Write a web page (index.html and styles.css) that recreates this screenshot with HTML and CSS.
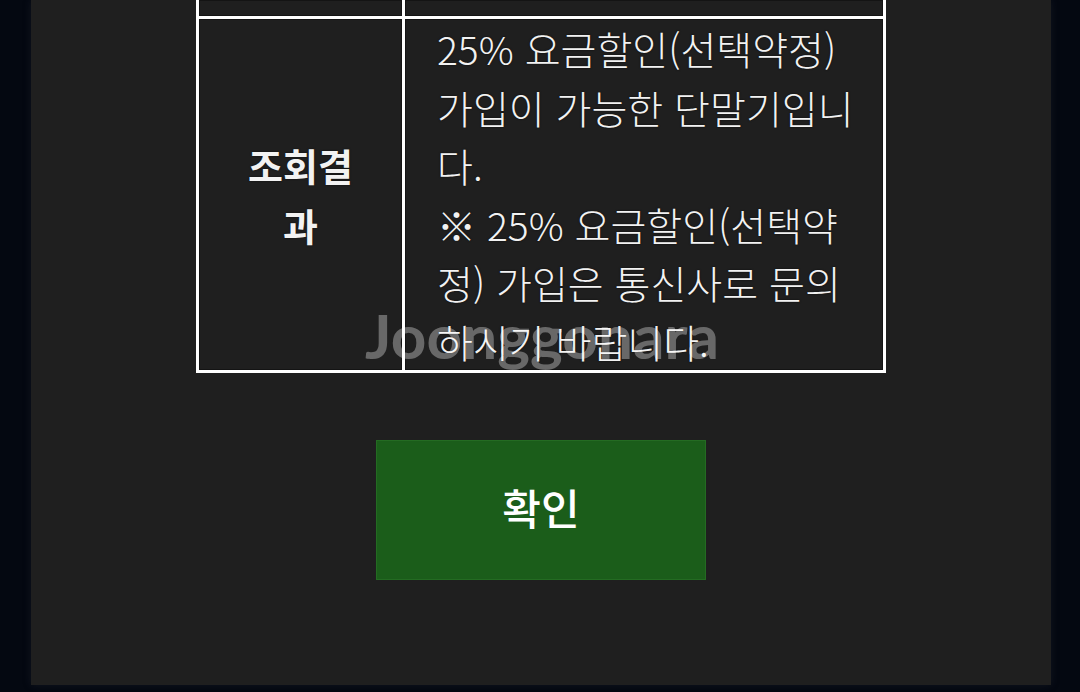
FILE: index.html
```html
<!DOCTYPE html>
<html lang="ko">
<head>
<meta charset="utf-8">
<title>조회결과</title>
<link rel="stylesheet" href="styles.css">
</head>
<body>
<div class="page">
  <div class="panel">
    <table class="result">
      <tr class="top-row">
        <td class="label"></td>
        <td class="value"></td>
      </tr>
      <tr>
        <td class="label"><strong>조회결과</strong></td>
        <td class="value">25% 요금할인(선택약정) 가입이 가능한 단말기입니다.<br>※ 25% 요금할인(선택약정) 가입은 통신사로 문의하시기 바랍니다.</td>
      </tr>
    </table>
    <button class="confirm" type="button">확인</button>
  </div>
</div>
<div class="watermark">Joonggonara</div>
</body>
</html>
```

FILE: styles.css
```css
html, body {
  margin: 0;
  padding: 0;
}
body {
  width: 1080px;
  height: 692px;
  overflow: hidden;
  background: #040811;
  font-family: "Noto Sans CJK KR", "Noto Sans", sans-serif;
  position: relative;
}
.page {
  padding: 0 29px 0 31px;
}
.panel {
  height: 685px;
  background: #1f1f1f;
  display: flex;
  flex-direction: column;
  align-items: center;
  box-shadow: 0 0 8px rgba(60, 60, 70, 0.25);
}
.result {
  border-collapse: separate;
  border-spacing: 0;
  table-layout: fixed;
  width: 690px;
  color: #f2f2f2;
  font-size: 39px;
  font-weight: 300;
  line-height: 58.5px;
  text-shadow: 0 0 2px rgba(0, 0, 0, 0.7);
}
.result td {
  border-right: 3px solid #ffffff;
  border-bottom: 3px solid #ffffff;
  vertical-align: middle;
  padding: 0;
  box-shadow: inset 0 0 0 1px #141414;
}
.result td:first-child {
  border-left: 3px solid #ffffff;
}
.result .label {
  width: 123px;
  padding: 0 40px;
  text-align: center;
}
.result .label strong {
  font-weight: 700;
  font-size: 38px;
}
.result .value {
  padding: 0 22px 0 32px;
  text-align: left;
}
.top-row td {
  height: 16px;
}
.confirm {
  margin-top: 67px;
  width: 330px;
  height: 140px;
  background: #1b5d1a;
  border: 1px solid #246b22;
  color: #ffffff;
  font-family: "Noto Sans CJK KR", "Noto Sans", sans-serif;
  font-size: 42px;
  font-weight: 500;
  padding: 0 0 8px 0;
}
.watermark {
  position: absolute;
  left: 365px;
  top: 298px;
  font-family: "Lato", "Open Sans", sans-serif;
  font-weight: 700;
  font-size: 62px;
  line-height: 74px;
  color: rgba(255, 255, 255, 0.33);
  letter-spacing: 0.1px;
  white-space: nowrap;
}
```
